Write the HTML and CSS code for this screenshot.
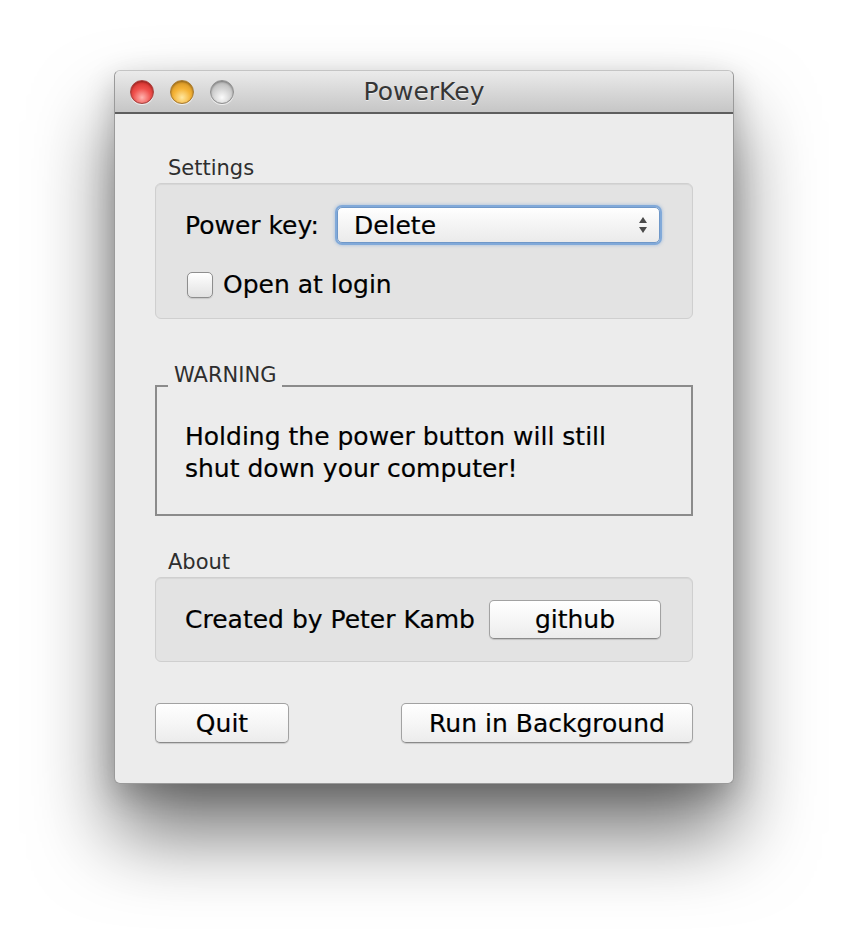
FILE: index.html
```html
<!DOCTYPE html>
<html lang="en">
<head>
    <meta charset="UTF-8">
    <title>PowerKey</title>
    <link rel="stylesheet" href="styles.css">
</head>
<body>

<article class="window">
    <header class="titlebar">
        <div class="lights">
            <span class="light close"></span>
            <span class="light minimize"></span>
            <span class="light zoom"></span>
        </div>
        <h1>PowerKey</h1>
    </header>

    <section class="content">
        <div class="group">
            <h2 class="group-title">Settings</h2>
            <div class="group-box settings">
                <div class="row">
                    <span class="label">Power key:</span>
                    <div class="popup">
                        <span>Delete</span>
                        <svg class="arrows" width="10" height="18" viewBox="0 0 10 18">
                            <path d="M5 1 L9 7 L1 7 Z" fill="#4a4a4a"/>
                            <path d="M5 17 L9 11 L1 11 Z" fill="#4a4a4a"/>
                        </svg>
                    </div>
                </div>
                <label class="check">
                    <span class="box"></span>
                    <span>Open at login</span>
                </label>
            </div>
        </div>

        <fieldset class="warning">
            <legend>WARNING</legend>
            <p>Holding the power button will still<br>shut down your computer!</p>
        </fieldset>

        <div class="group about-group">
            <h2 class="group-title">About</h2>
            <div class="group-box about">
                <span class="label">Created by Peter Kamb</span>
                <button class="btn github">github</button>
            </div>
        </div>

        <footer class="actions">
            <button class="btn quit">Quit</button>
            <button class="btn run">Run in Background</button>
        </footer>
    </section>
</article>

</body>
</html>
```

FILE: styles.css
```css
body {
    margin: 0;
    padding: 70px 0 0 114px;
    min-height: 942px;
    box-sizing: border-box;
    background-color: #ffffff;
    font-family: "DejaVu Sans", "Noto Sans", sans-serif;
}

.window {
    width: 620px;
    height: 714px;
    box-sizing: border-box;
    background-color: #ececec;
    border-radius: 6px;
    border: 1px solid #9a9a9a;
    border-top-color: #c4c4c4;
    box-shadow: 0 50px 80px rgba(0, 0, 0, 0.55), 0 10px 30px rgba(0, 0, 0, 0.2);
    overflow: hidden;
}

.titlebar {
    position: relative;
    height: 41px;
    display: flex;
    align-items: center;
    justify-content: center;
    background: linear-gradient(#ebebeb, #d8d8d8 50%, #c6c6c6);
    border-bottom: 2px solid #5e5e5e;
    border-radius: 6px 6px 0 0;
}

.titlebar h1 {
    margin: 0;
    font-size: 25px;
    font-weight: normal;
    color: #363636;
    text-shadow: 0 1px 0 rgba(255, 255, 255, 0.6);
}

.lights {
    position: absolute;
    left: 15px;
    top: 9px;
    display: flex;
    gap: 16px;
}

.light {
    width: 24px;
    height: 24px;
    border-radius: 50%;
    box-sizing: border-box;
    box-shadow: inset 0 1px 2px rgba(0, 0, 0, 0.35), 0 1px 0 rgba(255, 255, 255, 0.7);
}

.light.close {
    background: radial-gradient(circle at 50% 75%, #ffb4b0 0, #f0514d 45%, #c4201c 100%);
    border: 1px solid #a8413e;
}

.light.minimize {
    background: radial-gradient(circle at 50% 75%, #ffe7a0 0, #f5b336 45%, #c5851a 100%);
    border: 1px solid #a77a31;
}

.light.zoom {
    background: radial-gradient(circle at 50% 75%, #fbfbfb 0, #d4d4d4 45%, #a8a8a8 100%);
    border: 1px solid #8f8f8f;
}

.content {
    padding: 42px 40px 0 40px;
    display: flex;
    flex-direction: column;
}

.group-title {
    margin: 0 0 3px 13px;
    font-size: 21px;
    font-weight: normal;
    line-height: 24px;
    color: #2e2e2e;
}

.group-box {
    background-color: #e3e3e3;
    border: 1px solid #cfcfcf;
    border-radius: 6px;
    box-shadow: inset 0 1px 1px rgba(0, 0, 0, 0.06);
}

.settings {
    height: 136px;
    box-sizing: border-box;
    padding: 23px 32px 0 29px;
    display: flex;
    flex-direction: column;
    gap: 29px;
}

.row {
    display: flex;
    align-items: center;
    gap: 18px;
}

.label,
.check,
.warning p {
    font-size: 25px;
    color: #000000;
    -webkit-text-stroke: 0.2px #000000;
}

.popup {
    flex: 1;
    height: 36px;
    box-sizing: border-box;
    display: flex;
    align-items: center;
    justify-content: space-between;
    padding: 0 11px 0 16px;
    font-size: 25px;
    -webkit-text-stroke: 0.2px #000000;
    background: linear-gradient(#ffffff, #f4f4f4 50%, #ebebeb);
    border: 1px solid #6f98c9;
    border-radius: 5px;
    box-shadow: 0 0 0 2px rgba(110, 158, 215, 0.75), 0 0 3px 3px rgba(110, 158, 215, 0.35);
}

.check {
    display: flex;
    align-items: center;
    gap: 10px;
    margin-left: 2px;
    line-height: 26px;
}

.check .box {
    width: 26px;
    height: 26px;
    box-sizing: border-box;
    border: 1px solid #8e8e8e;
    border-radius: 5px;
    background: linear-gradient(#ffffff, #f0f0f0 50%, #e2e2e2);
    box-shadow: 0 1px 1px rgba(0, 0, 0, 0.12);
}

.warning {
    margin: 45px 0 0 0;
    height: 152px;
    box-sizing: border-box;
    border: 2px solid #8b8b8b;
    padding: 0;
}

.warning legend {
    margin-left: 11px;
    padding: 0 6px 22px 6px;
    font-size: 21px;
    line-height: 22px;
    color: #2e2e2e;
}

.warning p {
    margin: 13px 0 0 28px;
    line-height: 32px;
}

.about-group {
    margin-top: 34px;
}

.about {
    height: 85px;
    box-sizing: border-box;
    display: flex;
    align-items: center;
    padding: 0 31px 0 29px;
    justify-content: space-between;
}

.btn {
    font-family: inherit;
    font-size: 25px;
    color: #000000;
    -webkit-text-stroke: 0.2px #000000;
    height: 40px;
    box-sizing: border-box;
    background: linear-gradient(#ffffff, #f6f6f6 50%, #ececec);
    border: 1px solid #a2a2a2;
    border-bottom-color: #8a8a8a;
    border-radius: 5px;
    box-shadow: 0 1px 1px rgba(0, 0, 0, 0.15);
    padding: 0;
}

.github {
    width: 172px;
    height: 39px;
}

.actions {
    margin-top: 41px;
    display: flex;
    justify-content: space-between;
}

.quit {
    width: 134px;
}

.run {
    width: 292px;
}
```
